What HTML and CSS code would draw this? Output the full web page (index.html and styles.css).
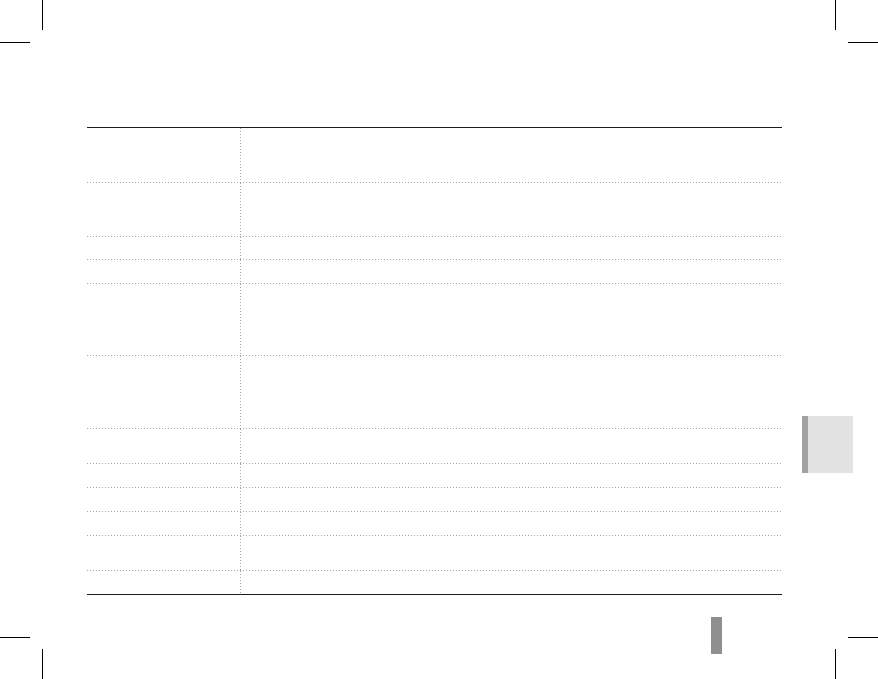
FILE: index.html
```html
<!DOCTYPE html>
<html lang="en">
<head>
<meta charset="utf-8">
<title>Page</title>
<link rel="stylesheet" href="styles.css">
</head>
<body>
<div class="page">
  <span class="mark v tl"></span><span class="mark h tl"></span>
  <span class="mark v tr"></span><span class="mark h tr"></span>
  <span class="mark v bl"></span><span class="mark h bl"></span>
  <span class="mark v br"></span><span class="mark h br"></span>

  <div class="table">
    <div class="row h55"><div class="key"></div><div class="val"></div></div>
    <div class="row h54"><div class="key"></div><div class="val"></div></div>
    <div class="row h23"><div class="key"></div><div class="val"></div></div>
    <div class="row h24"><div class="key"></div><div class="val"></div></div>
    <div class="row h72"><div class="key"></div><div class="val"></div></div>
    <div class="row h73"><div class="key"></div><div class="val"></div></div>
    <div class="row h35"><div class="key"></div><div class="val"></div></div>
    <div class="row h24"><div class="key"></div><div class="val"></div></div>
    <div class="row h24"><div class="key"></div><div class="val"></div></div>
    <div class="row h24"><div class="key"></div><div class="val"></div></div>
    <div class="row h35"><div class="key"></div><div class="val"></div></div>
    <div class="row h23 last"><div class="key"></div><div class="val"></div></div>
  </div>

  <div class="side-tab"></div>
  <div class="page-bar"></div>
</div>
</body>
</html>
```
FILE: styles.css
```css
html, body {
  margin: 0;
  padding: 0;
  background: #ffffff;
  font-family: "Liberation Sans", Arial, sans-serif;
}

.page {
  position: relative;
  width: 878px;
  height: 679px;
  overflow: hidden;
  padding-top: 127px;
  box-sizing: border-box;
}

.mark {
  position: absolute;
  background: #000000;
  display: block;
}
.mark.v { width: 1px; height: 30px; }
.mark.h { width: 30px; height: 1px; }
.mark.v.tl { left: 42px; top: 0; }
.mark.h.tl { left: 0; top: 42px; }
.mark.v.tr { left: 835px; top: 0; }
.mark.h.tr { left: 848px; top: 42px; }
.mark.v.bl { left: 42px; top: 649px; }
.mark.h.bl { left: 0; top: 637px; }
.mark.v.br { left: 835px; top: 649px; }
.mark.h.br { left: 848px; top: 637px; }

.table {
  margin-left: 87px;
  width: 695px;
  border-top: 1px solid #1e1b1c;
  border-bottom: 1px solid #1e1b1c;
  display: flex;
  flex-direction: column;
}

.row {
  display: grid;
  grid-template-columns: 154px 1fr;
  box-sizing: border-box;
  background-image: repeating-linear-gradient(to right, #a6a6a6 0 1px, transparent 1px 3px);
  background-size: 100% 1px;
  background-position: left bottom;
  background-repeat: no-repeat;
}
.row.last { background-image: none; }

.key {
  background-image: repeating-linear-gradient(to bottom, #a6a6a6 0 1px, transparent 1px 3px);
  background-size: 1px 100%;
  background-position: right top;
  background-repeat: no-repeat;
}

.h23 { height: 23px; }
.h24 { height: 24px; }
.h35 { height: 35px; }
.h54 { height: 54px; }
.h55 { height: 55px; }
.h72 { height: 72px; }
.h73 { height: 73px; }

.side-tab {
  position: absolute;
  left: 802px;
  top: 416px;
  width: 45px;
  height: 57px;
  background: #e1e2e1;
  border-left: 6px solid #a1a1a1;
}

.page-bar {
  position: absolute;
  left: 711px;
  top: 617px;
  width: 11px;
  height: 37px;
  background: #8f8f8f;
}
```
